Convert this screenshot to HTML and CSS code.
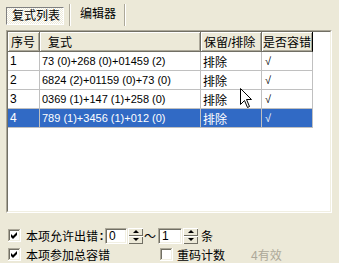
FILE: index.html
```html
<!DOCTYPE html>
<html>
<head>
<meta charset="utf-8">
<link rel="stylesheet" href="styles.css">
</head>
<body>
<div class="win">
  <div class="tabs">
    <div class="tab active">复式列表</div>
    <div class="sep sep1"></div>
    <div class="tab">编辑器</div>
    <div class="sep sep2"></div>
  </div>
  <div class="list">
    <div class="list-in">
      <table class="grid">
        <colgroup><col class="c1"><col class="c2"><col class="c3"><col class="c4"></colgroup>
        <thead>
          <tr><th>序号</th><th class="h2">复式</th><th>保留/排除</th><th class="h4">是否容错</th></tr>
        </thead>
        <tbody>
          <tr><td>1</td><td class="expr">73 (0)+268 (0)+01459 (2)</td><td>排除</td><td class="chk">√</td></tr>
          <tr><td>2</td><td class="expr">6824 (2)+01159 (0)+73 (0)</td><td>排除</td><td class="chk">√</td></tr>
          <tr><td>3</td><td class="expr">0369 (1)+147 (1)+258 (0)</td><td>排除</td><td class="chk">√</td></tr>
          <tr class="sel"><td>4</td><td class="expr">789 (1)+3456 (1)+012 (0)</td><td>排除</td><td class="chk">√</td></tr>
        </tbody>
      </table>
    </div>
  </div>
  <div class="opts">
    <div class="opt-row">
      <span class="cb"><svg width="13" height="13" viewBox="0 0 13 13"><rect x="0" y="0" width="13" height="13" fill="#fff"/><path d="M0 0h12v1H1v11H0z" fill="#ACA899"/><path d="M1 1h10v1H2v9H1z" fill="#716F64"/><path d="M12 0h1v13H0v-1h12z" fill="#fff"/><path d="M11 1h1v11H1v-1h10z" fill="#F1EFE2"/><polygon points="3,5 5,7 9,3 9,6 5,10 3,8" fill="#000"/></svg></span>
      <span class="lbl">本项允许出错</span><span class="colon">:</span>
      <span class="num">0</span>
      <span class="spin"><span class="sb up"><i></i></span><span class="sb dn"><i></i></span></span>
      <span class="tilde">～</span>
      <span class="num num2">1</span>
      <span class="spin"><span class="sb up"><i></i></span><span class="sb dn"><i></i></span></span>
      <span class="tiao">条</span>
    </div>
    <div class="opt-row">
      <span class="cb"><svg width="13" height="13" viewBox="0 0 13 13"><rect x="0" y="0" width="13" height="13" fill="#fff"/><path d="M0 0h12v1H1v11H0z" fill="#ACA899"/><path d="M1 1h10v1H2v9H1z" fill="#716F64"/><path d="M12 0h1v13H0v-1h12z" fill="#fff"/><path d="M11 1h1v11H1v-1h10z" fill="#F1EFE2"/><polygon points="3,5 5,7 9,3 9,6 5,10 3,8" fill="#000"/></svg></span>
      <span class="lbl">本项参加总容错</span>
      <span class="cb cb2"><svg width="13" height="13" viewBox="0 0 13 13"><rect x="0" y="0" width="13" height="13" fill="#fff"/><path d="M0 0h12v1H1v11H0z" fill="#ACA899"/><path d="M1 1h10v1H2v9H1z" fill="#716F64"/><path d="M12 0h1v13H0v-1h12z" fill="#fff"/><path d="M11 1h1v11H1v-1h10z" fill="#F1EFE2"/></svg></span>
      <span class="lbl">重码计数</span>
      <span class="valid">4有效</span>
    </div>
  </div>
  <svg class="cursor" width="13" height="21" viewBox="0 0 13 21"><polygon points="0.5,0.5 0.5,16.5 4.5,12.5 7.5,19.5 9.5,18.5 6.5,11.5 11.5,11.5" fill="#fff" stroke="#000" stroke-width="1"/></svg>
</div>
</body>
</html>
```
FILE: styles.css
```css
html, body {
  margin: 0;
  padding: 0;
}
body {
  background: #ECE9D8;
  font-family: "Liberation Sans", "Noto Sans CJK SC", sans-serif;
  font-size: 12px;
  color: #000;
}
.win {
  position: relative;
  width: 339px;
  height: 263px;
  overflow: hidden;
}
.tabs {
  display: flex;
  align-items: center;
  height: 22px;
  padding: 4px 0 0 6px;
}
.tab {
  height: 18px;
  line-height: 17px;
  box-sizing: border-box;
}
.tab.active {
  width: 58px;
  padding-left: 5px;
  border: 1px solid;
  border-color: #808080 #fff #fff #808080;
  background: repeating-conic-gradient(#fff 0 25%, #ECE9D8 0 50%) 0 0 / 2px 2px;
  margin-top: 2px;
}
.sep {
  width: 0;
  height: 22px;
  border-left: 1px solid #ACA899;
  border-right: 1px solid #fff;
}
.sep1 { margin: 0 9px 0 5px; }
.sep2 { margin: 0 0 0 8px; }
.list {
  margin: 4px 7px 0 6px;
  height: 183px;
  box-sizing: border-box;
  border: 1px solid;
  border-color: #ACA899 #fff #fff #ACA899;
}
.list-in {
  height: 100%;
  box-sizing: border-box;
  border: 1px solid;
  border-color: #716F64 #F1EFE2 #F1EFE2 #716F64;
  background: #fff;
}
.grid {
  table-layout: fixed;
  border-collapse: separate;
  border-spacing: 0;
  width: 305px;
}
.c1 { width: 32px; }
.c2 { width: 161px; }
.c3 { width: 61px; }
.c4 { width: 51px; }
th {
  height: 20px;
  box-sizing: border-box;
  padding: 0 0 0 3px;
  text-align: left;
  font-weight: normal;
  background: #ECE9D8;
  border-right: 1px solid #716F64;
  border-bottom: 1px solid #716F64;
  box-shadow: inset 1px 1px #fff, inset -1px -1px #ACA899;
  white-space: nowrap;
  overflow: hidden;
}
th.h2 { padding-left: 8px; }
th.h4 { padding-left: 1px; border-right: 1px solid #000; }
td {
  height: 19px;
  box-sizing: border-box;
  padding: 0 0 0 2px;
  border-right: 1px solid #C0C0C0;
  border-bottom: 1px solid #C0C0C0;
  white-space: nowrap;
  overflow: hidden;
}
td.expr { font-size: 11px; }
td.chk { padding-left: 3px; font-size: 11px; }
tr.sel td {
  background: #316AC5;
  color: #fff;
}
.opts {
  margin-top: 13px;
  padding-left: 8px;
}
.opt-row {
  display: flex;
  align-items: center;
  height: 19px;
}
.cb {
  display: flex;
  width: 13px;
  height: 13px;
  margin-right: 5px;
}
.cb2 { margin-left: 50px; margin-right: 4px; }
.lbl { white-space: nowrap; }
.colon {
  width: 7px;
  font-weight: bold;
  text-align: center;
}
.num {
  width: 22px;
  height: 16px;
  box-sizing: border-box;
  border: 1px solid;
  border-color: #ACA899 #fff #fff #ACA899;
  box-shadow: inset 1px 1px #716F64, inset -1px -1px #F1EFE2;
  background: #fff;
  padding-left: 3px;
  line-height: 14px;
  font-size: 12px;
}
.num2 { width: 24px; margin-left: 2px; }
.spin {
  display: flex;
  flex-direction: column;
  width: 15px;
  height: 16px;
  margin-left: 1px;
}
.sb {
  flex: 1;
  display: flex;
  align-items: center;
  justify-content: center;
  background: #ECE9D8;
  box-shadow: inset 1px 1px #fff, inset -1px -1px #716F64;
}
.sb i {
  width: 0;
  height: 0;
  border-left: 3px solid transparent;
  border-right: 3px solid transparent;
}
.up i { border-bottom: 3px solid #000; }
.dn i { border-top: 3px solid #000; }
.tilde {
  width: 12px;
  margin-left: 1px;
  text-align: center;
}
.tiao { margin-left: 3px; }
.valid {
  margin-left: 26px;
  color: #ACA899;
}
.cursor {
  position: absolute;
  left: 240px;
  top: 88px;
}
```
